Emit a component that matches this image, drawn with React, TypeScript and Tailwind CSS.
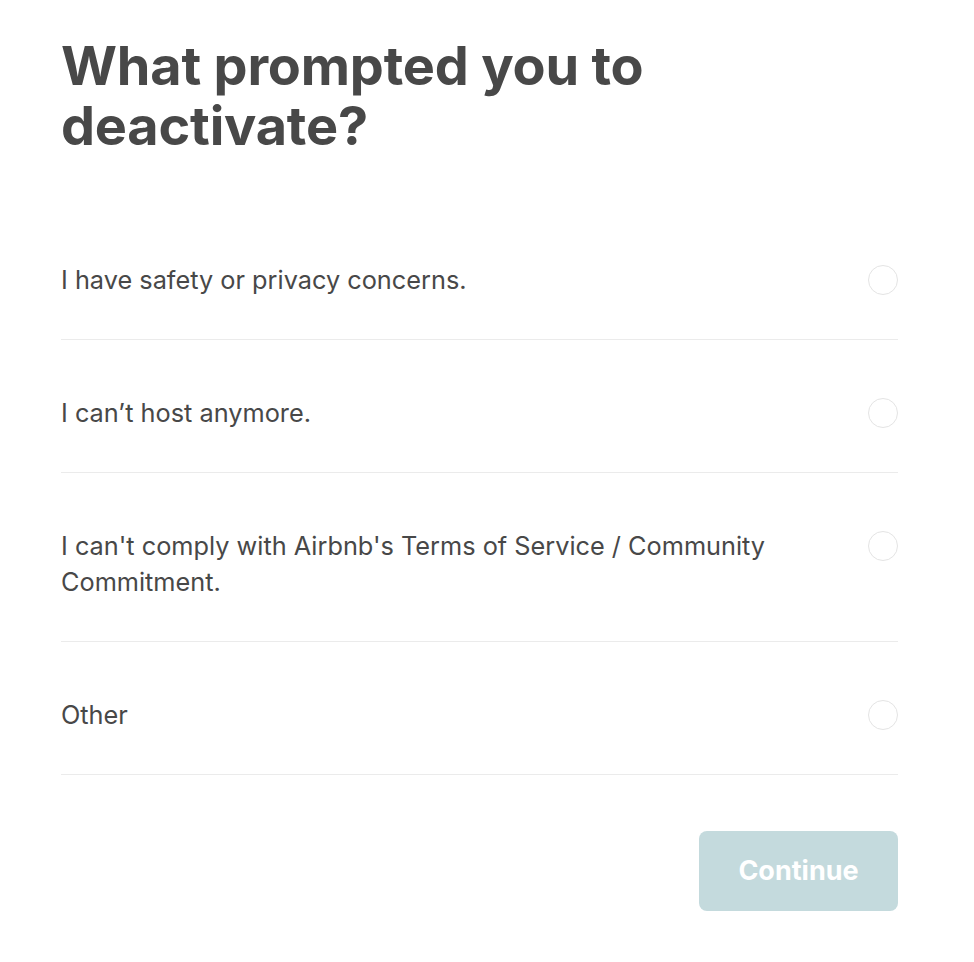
const options = [
  "I have safety or privacy concerns.",
  "I can’t host anymore.",
  "I can't comply with Airbnb's Terms of Service / Community Commitment.",
  "Other",
]

export default function App() {
  return (
    <div className="min-h-screen bg-white text-[#484848]" style={{ fontFamily: 'Inter, "Noto Sans", sans-serif' }}>
      <div className="w-[837px] ml-[61px] pt-[36px]">
        <h1 className="text-[54px] leading-[60px] font-bold tracking-[-0.2px] w-[680px]">
          What prompted you to deactivate?
        </h1>
        <div className="mt-[51px]">
          {options.map((o) => (
            <label key={o} className="flex items-start justify-between gap-8 pt-[55px] pb-[41px] border-b border-[#ebebeb] cursor-pointer">
              <span className="text-[25.3px] leading-[36px] max-w-[740px]">{o}</span>
              <span className="mt-[3px] w-[30px] h-[30px] rounded-full border border-[#e4e4e4] shrink-0" />
            </label>
          ))}
        </div>
        <div className="flex justify-end mt-[56px]">
          <button className="w-[199px] h-[80px] rounded-lg bg-[#c4dadd] text-white text-[27px] font-bold">
            Continue
          </button>
        </div>
      </div>
    </div>
  )
}
